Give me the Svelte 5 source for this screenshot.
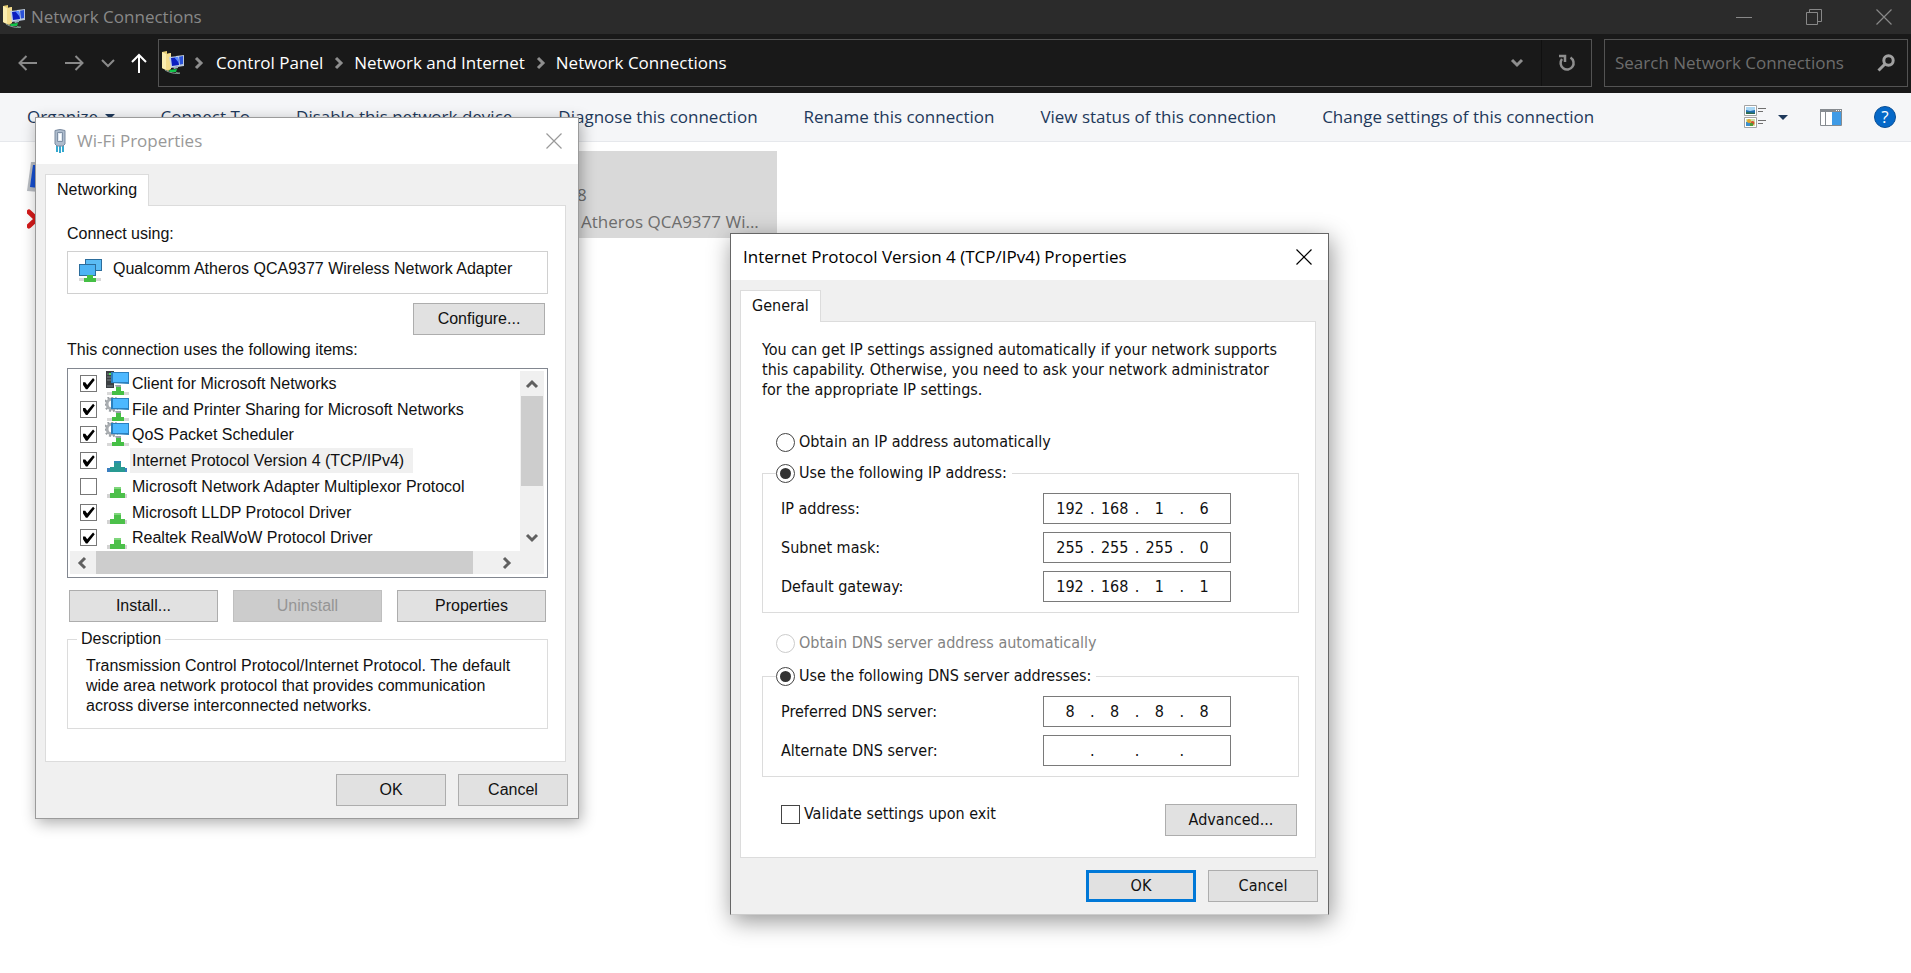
<script>
  const commands = [
    'Connect To',
    'Disable this network device',
    'Diagnose this connection',
    'Rename this connection',
    'View status of this connection',
    'Change settings of this connection'
  ];
  const crumbs = ['Control Panel', 'Network and Internet', 'Network Connections'];
  const items = [
    { name: 'Client for Microsoft Networks', icon: 'client', on: true },
    { name: 'File and Printer Sharing for Microsoft Networks', icon: 'service', on: true },
    { name: 'QoS Packet Scheduler', icon: 'service', on: true },
    { name: 'Internet Protocol Version 4 (TCP/IPv4)', icon: 'protocol', on: true, selected: true },
    { name: 'Microsoft Network Adapter Multiplexor Protocol', icon: 'protocol', on: false },
    { name: 'Microsoft LLDP Protocol Driver', icon: 'protocol', on: true },
    { name: 'Realtek RealWoW Protocol Driver', icon: 'protocol', on: true }
  ];
  const ipRows = [
    { label: 'IP address:', id: 'ip', parts: ['192', '168', '1', '6'] },
    { label: 'Subnet mask:', id: 'mask', parts: ['255', '255', '255', '0'] },
    { label: 'Default gateway:', id: 'gateway', parts: ['192', '168', '1', '1'] }
  ];
  const dnsRows = [
    { label: 'Preferred DNS server:', id: 'dns1', parts: ['8', '8', '8', '8'] },
    { label: 'Alternate DNS server:', id: 'dns2', parts: ['', '', '', ''] }
  ];
</script>

{#snippet folderIcon()}
  <svg width="24" height="24" viewBox="0 0 24 24" aria-hidden="true">
    <path d="M1 1l5-1v3l4-1v16l-3 2-6-3z" fill="#e9cf73" />
    <path d="M1 1l4 2v16l-4-2z" fill="#fbedb0" />
    <path d="M5 3l5-1v16l-5 1z" fill="#f3dc8d" />
    <path d="M15 5l8-1v11l-7 1z" fill="#b9c7d9" />
    <path d="M17 6l5-1v8l-5 1z" fill="#2a52d8" />
    <path d="M8 6l10-1 1 10-9 2z" fill="#c3d2e6" />
    <path d="M10 7l7-1 1 8-7 1z" fill="#0b1fc0" />
    <path d="M13 6l4 0 1 6z" fill="#5b8bff" />
    <path d="M12 16l5-1v2l-4 1z" fill="#9fb0bd" />
    <path d="M4 19c5 3 11 4 15 3" fill="none" stroke="#8ca39a" stroke-width="1" />
    <path d="M8 19l8-1-1 3-6 0z" fill="#12c44a" />
    <path d="M15 21l4 1-1 1-3-1z" fill="#7f9a8b" />
  </svg>
{/snippet}

{#snippet chevron(dir)}
  <svg class="chev" width="14" height="14" viewBox="0 0 14 14" aria-hidden="true">
    {#if dir === 'right'}<path d="M4 2l5 5-5 5" />
    {:else if dir === 'left'}<path d="M10 2L5 7l5 5" />
    {:else if dir === 'up'}<path d="M2 10l5-5 5 5" />
    {:else}<path d="M2 4l5 5 5-5" />{/if}
  </svg>
{/snippet}

{#snippet itemIcon(kind, selected)}
  <svg width="25" height="25" viewBox="0 0 25 25" aria-hidden="true">
    {#if kind === 'client'}
      <path d="M1 0h8v17H1z" fill="#3b3f42" />
      <path d="M2 3h6M2 6h4M2 9h4M2 15h6" stroke="#7d8387" />
      <path d="M4 3h2" stroke="#4fe05a" stroke-width="2" />
    {:else if kind === 'service'}
      <circle cx="7" cy="7" r="5" fill="none" stroke="#a9adb1" stroke-width="3" />
      <circle cx="7" cy="7" r="7" fill="none" stroke="#9ba0a4" stroke-width="2" stroke-dasharray="2 2" />
    {/if}
    {#if kind === 'protocol'}
      <path d="M2 20h20v4H2z" fill={selected ? '#3b7fc0' : '#d3d3d3'} />
      <path d="M9 13h7v6h4v5H5v-5h4z" fill={selected ? '#289a92' : '#4cc04a'} />
      <path d="M9 13h7v2H9z" fill={selected ? '#2d8bb0' : '#7fd67c'} />
    {:else}
      <path d="M10 14h6v4h-4z" fill="#9aa3a8" />
      <path d="M6 1h18v12l-18-1z" fill="#2b7fbd" />
      <path d="M8 2h15v9L8 11z" fill="#4db8ff" />
      <path d="M2 21h22v3H2z" fill="#d8d8d8" />
      <path d="M11 16h5v4h3v4H7v-4h4z" fill="#45bf45" />
    {/if}
  </svg>
{/snippet}

{#snippet closeIcon()}
  <svg width="18" height="18" viewBox="0 0 18 18" aria-hidden="true">
    <path d="M1.500 1.500l15 15M16.500 1.500l-15 15" fill="none" stroke="currentColor" stroke-width="1.200" />
  </svg>
{/snippet}

{#snippet address(row)}
  <div class="field">
    <label for="{row.id}-0">{row.label}</label>
    <div class="octets">
      {#each row.parts as part, i}
        {#if i > 0}<span>.</span>{/if}
        <input id="{row.id}-{i}" type="text" value={part} aria-label="{row.label} {i + 1}" />
      {/each}
    </div>
  </div>
{/snippet}

<div class="window">
  <header class="titlebar">
    {@render folderIcon()}
    <h1>Network Connections</h1>
    <div class="caption">
      <button aria-label="Minimize"><svg width="18" height="18" viewBox="0 0 18 18"><path d="M1 9.500h16" /></svg></button>
      <button aria-label="Restore"><svg width="18" height="18" viewBox="0 0 18 18"><path d="M1.500 4.500h11v12h-11zM4.500 4V1.500h12v12H13" /></svg></button>
      <button aria-label="Close">{@render closeIcon()}</button>
    </div>
  </header>

  <nav class="navbar">
    <button class="back" aria-label="Back"><svg width="20" height="20" viewBox="0 0 20 20"><path d="M19 10H1.500M8.500 3l-7 7 7 7" /></svg></button>
    <button class="forward" aria-label="Forward"><svg width="20" height="20" viewBox="0 0 20 20"><path d="M1 10h17.500M11.500 3l7 7-7 7" /></svg></button>
    <button class="recent" aria-label="Recent locations"><svg width="14" height="20" viewBox="0 0 14 20"><path d="M1 7l6 6 6-6" /></svg></button>
    <button class="up" aria-label="Up"><svg width="18" height="20" viewBox="0 0 18 20"><path d="M9 20V2M2 9l7-7 7 7" /></svg></button>
    <div class="path">
      {@render folderIcon()}
      {#each crumbs as crumb}
        {@render chevron('right')}
        <a href="#top">{crumb}</a>
      {/each}
      <button class="history" aria-label="Previous locations">{@render chevron('down')}</button>
      <button class="refresh" aria-label="Refresh">
        <svg width="18" height="18" viewBox="0 0 18 18"><path d="M12.500 3.500A6.500 6.500 0 1 1 4 5M1 2h6v6" fill="none" stroke="#8e8e8e" stroke-width="2.500" /></svg>
      </button>
    </div>
    <div class="search">
      <input type="search" placeholder="Search Network Connections" aria-label="Search Network Connections" />
      <svg width="18" height="18" viewBox="0 0 18 18" aria-hidden="true">
        <circle cx="11.500" cy="6.500" r="4.700" fill="none" stroke="#a0a0a0" stroke-width="3" />
        <path d="M8 10l-6.500 6.500" stroke="#a0a0a0" stroke-width="3" />
      </svg>
    </div>
  </nav>

  <div class="toolbar">
    <button>Organize <i class="caret"></i></button>
    {#each commands as command}
      <button>{command}</button>
    {/each}
    <div class="views">
      <button class="layout" aria-label="Change your view">
        <svg width="22" height="24" viewBox="0 0 22 24">
          <path d="M.500.500h12v10H.500zM.500 12.500h12v10H.500z" fill="#fff" stroke="#a3a3a3" />
          <path d="M2 2h9v7H2z" fill="#a9d7f5" /><path d="M2 5l4 1 5-1v4H2z" fill="#1f6fae" /><path d="M2 7l9 1v1H2z" fill="#2e6b4e" />
          <path d="M2 14h9v7H2z" fill="#cfe3a8" /><path d="M2 17h4v4H2z" fill="#3b8ecb" /><circle cx="5" cy="16" r="2" fill="#e2a52b" /><circle cx="8.500" cy="18" r="2" fill="#d8502c" /><path d="M6 18h3v3H6z" fill="#4f9a35" />
          <path d="M14 3.500h8M14 6.500h5M14 15.500h8M14 18.500h5" stroke="#6f6f6f" />
        </svg>
        <i class="caret"></i>
      </button>
      <button class="pane" aria-label="Preview pane">
        <svg width="22" height="17" viewBox="0 0 22 17">
          <path d="M.500.500h21v16H.500z" fill="#fff" stroke="#868b90" /><path d="M0 0h22v3H0z" fill="#868b90" />
          <path d="M16 1.500h1M18 1.500h1M20 1.500h1" stroke="#fff" /><path d="M5.500 3v13" stroke="#868b90" /><path d="M12 3h9v13h-9z" fill="#3f9be6" />
        </svg>
      </button>
      <button class="help" aria-label="Help">?</button>
    </div>
  </div>

  <main class="content">
    <div class="tile">
      <svg width="40" height="74" viewBox="0 0 40 74" aria-hidden="true">
        <path d="M4 1h34v32L0 30z" fill="#b8bcc2" /><path d="M6 4h30v26L3 26z" fill="#164fd0" />
        <path d="M2 51l15 14M17 51L2 65" stroke="#d51a1a" stroke-width="5" stroke-linecap="round" />
      </svg>
    </div>
    <div class="tile selected">
      <p class="net">8</p>
      <p>Atheros QCA9377 Wi...</p>
    </div>
  </main>

  <section class="dialog wifi" aria-label="Wi-Fi Properties">
    <div class="head">
      <svg width="14" height="24" viewBox="0 0 14 24" aria-hidden="true">
        <path d="M3 16h2v7H3zM6 16h2v8H6zM9 16h2v7H9z" fill="#35a8cf" />
        <path d="M2 1.500Q7-.500 12 1.500V15l-2 2H4l-2-2z" fill="#aebccd" stroke="#7a8ba0" />
        <path d="M4.500 3.500h5v9h-5z" fill="#dfe8f2" stroke="#7f90a5" />
        <path d="M7 5v6" stroke="#fff" stroke-width="2" />
      </svg>
      <h2>Wi-Fi Properties</h2>
      <button aria-label="Close">{@render closeIcon()}</button>
    </div>
    <div class="body">
      <div class="tab">Networking</div>
      <div class="panel">
        <p>Connect using:</p>
        <div class="adapter">
          <svg width="25" height="25" viewBox="0 0 25 25" aria-hidden="true">
            <path d="M7 1h17v12H7z" fill="#2c6d9c" /><path d="M8 2h15v10H8z" fill="#5bbcf5" />
            <path d="M1 6h17v12H1z" fill="#2c6d9c" /><path d="M2 7h15v10H2z" fill="#4db4f5" />
            <path d="M1 20h22v3H1z" fill="#d8d8d8" /><path d="M9 17h6v3h3v4H6v-4h3z" fill="#45bf45" />
          </svg>
          <span>Qualcomm Atheros QCA9377 Wireless Network Adapter</span>
        </div>
        <button class="btn configure">Configure...</button>
        <p class="list-label">This connection uses the following items:</p>
        <div class="list">
          <div class="rows">
            {#each items as item}
              <label class="row">
                <input type="checkbox" checked={item.on} />
                {@render itemIcon(item.icon, item.selected)}
                <span class:picked={item.selected}>{item.name}</span>
              </label>
            {/each}
          </div>
          <div class="vbar">{@render chevron('up')}<div class="thumb"></div>{@render chevron('down')}</div>
          <div class="hbar">{@render chevron('left')}<div class="thumb"></div>{@render chevron('right')}</div>
        </div>
        <div class="actions">
          <button class="btn">Install...</button>
          <button class="btn" disabled>Uninstall</button>
          <button class="btn">Properties</button>
        </div>
        <fieldset>
          <legend>Description</legend>
          <p>Transmission Control Protocol/Internet Protocol. The default<br />wide area network protocol that provides communication<br />across diverse interconnected networks.</p>
        </fieldset>
      </div>
      <div class="foot"><button class="btn">OK</button><button class="btn">Cancel</button></div>
    </div>
  </section>

  <section class="dialog ipv4" aria-label="Internet Protocol Version 4 (TCP/IPv4) Properties">
    <div class="head">
      <h2>Internet Protocol Version 4 (TCP/IPv4) Properties</h2>
      <button aria-label="Close">{@render closeIcon()}</button>
    </div>
    <div class="body">
      <div class="tab">General</div>
      <div class="panel">
        <p>You can get IP settings assigned automatically if your network supports<br />this capability. Otherwise, you need to ask your network administrator<br />for the appropriate IP settings.</p>
        <label class="choice auto"><input type="radio" name="ip-mode" />Obtain an IP address automatically</label>
        <fieldset class="ipset">
          <legend><label class="choice"><input type="radio" name="ip-mode" checked />Use the following IP address:</label></legend>
          {#each ipRows as row}{@render address(row)}{/each}
        </fieldset>
        <label class="choice off"><input type="radio" name="dns-mode" disabled />Obtain DNS server address automatically</label>
        <fieldset class="dnsset">
          <legend><label class="choice"><input type="radio" name="dns-mode" checked />Use the following DNS server addresses:</label></legend>
          {#each dnsRows as row}{@render address(row)}{/each}
        </fieldset>
        <div class="last">
          <label class="choice"><input type="checkbox" />Validate settings upon exit</label>
          <button class="btn">Advanced...</button>
        </div>
      </div>
      <div class="foot"><button class="btn default">OK</button><button class="btn">Cancel</button></div>
    </div>
  </section>
</div>

<style>
  :global(body) { margin: 0; background: #fff; }
  * { box-sizing: border-box; }
  .window {
    position: relative;
    min-height: 100vh;
    display: flex;
    flex-direction: column;
    overflow: hidden;
    font: 17px/24px "Open Sans", "Noto Sans", sans-serif;
    background: #fff;
  }
  h1, h2, p { margin: 0; font-size: inherit; font-weight: 400; }
  button { font: inherit; color: inherit; border: 0; background: none; padding: 0; white-space: nowrap; }
  svg { display: block; flex: none; }

  .titlebar { height: 34px; display: flex; align-items: center; background: #2b2b2b; color: #888; padding-left: 2px; }
  .titlebar h1 { margin-left: 5px; flex: 1; }
  .caption { display: flex; gap: 15px; }
  .caption button { width: 55px; display: flex; justify-content: center; align-items: center; }
  .caption path { fill: none; stroke: #888; }

  .navbar { height: 59px; display: flex; align-items: center; background: #191919; padding: 0 3px 2px 18px; }
  .navbar > button svg path { fill: none; stroke: #8a8a8a; stroke-width: 2; }
  .navbar > .up svg path { stroke: #fff; }
  .forward { margin-left: 26px; }
  .recent { margin-left: 17px; }
  .up { margin: 0 10px 0 15px; }
  .path { flex: 1; height: 48px; display: flex; align-items: center; border: 1px solid #535353; color: #fff; padding-left: 2px; }
  .path a { color: inherit; text-decoration: none; }
  .path > .chev { margin: 0 8px 0 9px; }
  .path > svg:first-child + .chev { margin: 0 10px 0 7px; }
  .chev path { fill: none; stroke: #8e8e8e; stroke-width: 3; }
  .history { margin-left: auto; height: 46px; width: 48px; display: grid; place-items: center; }
  .refresh { height: 46px; width: 50px; display: grid; place-items: center; border-left: 1px solid #101010; }
  .search { width: 304px; height: 48px; margin-left: 12px; display: flex; align-items: center; border: 1px solid #535353; padding: 0 12px 0 10px; }
  .search input { flex: 1; min-width: 0; border: 0; outline: 0; background: none; font: inherit; padding: 0; color: #fff; }
  .search input::placeholder { color: #6d6d6d; opacity: 1; }

  .toolbar { height: 49px; display: flex; align-items: center; gap: 46px; padding: 0 15px 0 27px; background: #f5f6f8; border-bottom: 1px solid #e6e8ec; color: #1e395b; }
  .caret { display: inline-block; border: 5px solid transparent; border-top-color: #1e395b; border-bottom: 0; margin-left: 2px; vertical-align: 4px; }
  .views { margin-left: auto; display: flex; align-items: center; gap: 32px; }
  .layout { display: flex; align-items: center; gap: 10px; }
  .help { width: 22px; height: 22px; border-radius: 50%; background: #0568c8; color: #fff; line-height: 20px; border: 1px solid #0a4f96; }

  .content { display: flex; padding: 9px 27px; color: #6d6d6d; }
  .tile { width: 393px; height: 87px; padding-top: 10px; }
  .tile.selected { width: 357px; background: #d9d9d9; padding: 30px 0 0 161px; line-height: 27px; }
  .tile .net { margin-left: -4px; }

  .dialog { position: absolute; background: #f0f0f0; font: 16px/20px "Liberation Sans", Arial, sans-serif; color: #111; }
  .wifi { left: 35px; top: 117px; width: 544px; border: 1px solid #9b9b9b; box-shadow: 2px 4px 14px rgb(0 0 0 / 32%); }
  .ipv4 { left: 730px; top: 233px; width: 599px; border: 1px solid #666; border-bottom-color: #ccc; box-shadow: 2px 6px 22px rgb(0 0 0 / 42%); font: 16px/20px "DejaVu Sans Condensed", Tahoma, sans-serif; }
  .head { height: 46px; display: flex; align-items: center; background: #fff; padding: 0 15px 0 12px; font: 17px/24px "Open Sans", "Noto Sans", sans-serif; }
  .ipv4 .head { color: #000; }
  .wifi .head { color: #999; padding-left: 17px; }
  .wifi h2 { margin-left: 10px; }
  .head button { margin-left: auto; }
  .body { padding: 10px 12px 12px 9px; }
  .tab { position: relative; z-index: 1; display: table; height: 32px; line-height: 29px; margin-bottom: -1px; padding: 0 11px; background: #fff; border: 1px solid #dcdcdc; border-bottom: 0; }
  .panel { background: #fff; border: 1px solid #dcdcdc; padding: 18px 17px 32px 21px; }
  .btn { height: 32px; min-width: 110px; border: 1px solid #adadad; background: #e1e1e1; color: #111; }
  .btn:disabled { background: #ccc; border-color: #bfbfbf; color: #959595; }
  .btn.default { border: 3px solid #0078d7; }
  .foot { display: flex; justify-content: flex-end; gap: 12px; margin: 12px -2px 0 0; }

  .adapter { height: 43px; margin-top: 7px; display: flex; gap: 10px; padding: 6px 10px; border: 1px solid #d0d0d0; }
  .adapter span { line-height: 22px; }
  .configure { display: block; width: 132px; margin: 9px 3px 5px auto; }
  .list { height: 210px; margin-top: 8px; padding: 2px 3px 3px 2px; border: 1px solid #828790; display: grid; grid-template: 1fr 23px / 1fr 24px; background: #fff; }
  .rows { display: grid; grid-template-rows: repeat(7, 1fr); justify-items: start; min-width: 0; }
  .row { display: flex; align-items: center; height: 25px; padding-left: 10px; }
  .row svg { margin-left: 8px; }
  .row span { line-height: 25px; padding: 0 9px 0 2px; white-space: nowrap; }
  .picked { background: #f0f0f0; }
  input[type='checkbox'], input[type='radio'] { appearance: none; flex: none; margin: 0; display: grid; place-items: center; background: #fff; border: 1px solid #444; }
  .row input { width: 17px; height: 17px; border-color: #777; }
  .row input:checked::before { content: ''; width: 13px; height: 12px; background: #000; clip-path: polygon(8% 40%, 25% 40%, 40% 62%, 85% 5%, 98% 20%, 42% 98%, 30% 98%, 8% 62%); }
  .vbar { background: #f0f0f0; display: flex; flex-direction: column; align-items: center; padding: 6px 0; }
  .vbar .thumb { width: 22px; height: 90px; background: #cdcdcd; margin: 5px 0 auto; }
  .hbar { grid-column: 1 / 3; background: #f0f0f0; display: flex; align-items: center; padding: 0 30px 0 5px; }
  .hbar .thumb { width: 377px; height: 23px; background: #cdcdcd; margin: 0 auto 0 7px; }
  .list .chev path { stroke: #606060; }
  .actions { display: flex; justify-content: space-between; gap: 15px; margin: 12px 2px 7px; }
  .actions .btn { flex: 1; }
  fieldset { margin: 0; border: 1px solid #dcdcdc; padding: 7px 18px 12px; min-width: 0; }
  legend { padding: 0 4px; height: 20px; margin-left: -9px; }

  .ipv4 .panel { padding: 18px 16px 21px 21px; }
  .panel > p { white-space: nowrap; }
  .choice { display: flex; align-items: center; gap: 4px; height: 20px; white-space: nowrap; }
  .choice input { width: 19px; height: 19px; }
  .choice input[type='radio'] { border-radius: 50%; }
  .choice input[type='radio']:checked::before { content: ''; width: 11px; height: 11px; border-radius: 50%; background: #333; }
  .choice input:disabled { border-color: #ccc; }
  .auto { margin: 32px 0 11px 14px; }
  .off { margin: 20px 0 13px 14px; color: #838383; }
  .ipv4 fieldset { padding: 10px 67px 10px 18px; display: grid; gap: 8px; }
  .ipv4 legend { margin-left: -5px; padding: 0 5px 0 0; }
  .field { display: flex; justify-content: space-between; align-items: center; }
  .octets { width: 188px; height: 31px; display: flex; align-items: center; border: 1px solid #7a7a7a; padding: 0 8px; background: #fff; }
  .octets input { width: 36px; border: 0; outline: 0; padding: 0; text-align: center; font: inherit; color: inherit; background: none; }
  .octets span { width: 9px; text-align: center; }
  .last { display: flex; justify-content: space-between; align-items: flex-start; margin: 27px 2px 0 19px; }
  .last .btn { width: 132px; }
</style>
